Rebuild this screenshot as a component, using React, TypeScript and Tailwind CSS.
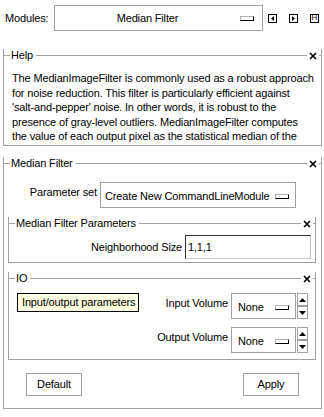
const line = "bg-[#a0a0a0]";

function CloseX() {
    return (
        <svg width="8" height="8" viewBox="0 0 8 8" className="mx-[2px] shrink-0">
            <path d="M1 1 L7 7 M7 1 L1 7" stroke="#000" strokeWidth="1.6" fill="none" />
        </svg>
    );
}

function Frame({ title, className, children }: { title: string; className: string; children: React.ReactNode }) {
    return (
        <div className={`border-x border-b border-[#a0a0a0] ${className}`}>
            {/* title sits on the top line */}
            <div className="-mx-px -mt-[6px] flex h-[13px] items-center">
                <span className={`h-px w-[7px] ${line}`} />
                <span className="ml-[1px] mr-[3px] whitespace-nowrap">{title}</span>
                <span className={`h-px flex-1 ${line}`} />
                <CloseX />
                <span className={`h-px w-[3px] ${line}`} />
            </div>
            {children}
        </div>
    );
}

function DropMark({ className = "" }: { className?: string }) {
    return <span className={`block h-[5px] w-[14px] shrink-0 border border-[#b0b0b0] border-b-black border-r-black bg-white ${className}`} />;
}

function Spinner() {
    return (
        <div className="ml-[1px] flex h-[26px] w-[11px] flex-col">
            <div className="flex h-[13px] items-center justify-center border border-[#a0a0a0]">
                <svg width="7" height="4" viewBox="0 0 7 4"><path d="M0 4 L3.5 0 L7 4 Z" fill="#000" /></svg>
            </div>
            <div className="flex h-[13px] items-center justify-center border border-[#a0a0a0]">
                <svg width="7" height="4" viewBox="0 0 7 4"><path d="M0 0 L3.5 4 L7 0 Z" fill="#000" /></svg>
            </div>
        </div>
    );
}

function VolumeRow({ label }: { label: string }) {
    return (
        <div className="flex items-start">
            <span className="mr-[3px] pt-[4px] whitespace-nowrap">{label}</span>
            <div className="flex h-[26px] w-[65px] items-center justify-between border border-[#a0a0a0] pl-[6px] pr-[6px] pt-[2px]">
                <span>None</span>
                <DropMark />
            </div>
            <Spinner />
        </div>
    );
}

export default function App() {
    const help = [
        "The MedianImageFilter is commonly used as a robust approach",
        "for noise reduction. This filter is particularly efficient against",
        "'salt-and-pepper' noise. In other words, it is robust to the",
        "presence of gray-level outliers. MedianImageFilter computes",
        "the value of each output pixel as the statistical median of the",
    ];

    return (
        <div className="h-[417px] w-[324px] overflow-hidden bg-white font-['Liberation_Sans',Arial,sans-serif] text-[11px] leading-[13px] tracking-[-0.15px] text-black">
            {/* Modules bar */}
            <div className="ml-[5px] mt-[5px] flex h-[26px] items-center">
                <span className="w-[49px]">Modules:</span>
                <div className="flex h-[26px] w-[209px] items-center border border-[#a0a0a0]">
                    <span className="flex-1 text-center">Median Filter</span>
                    <DropMark className="mr-[8px]" />
                </div>
                <span className="ml-[5px] flex h-[9px] w-[9px] items-center justify-center border border-black">
                    <svg width="3" height="5" viewBox="0 0 3 5"><path d="M3 0 L0 2.5 L3 5 Z" fill="#000" /></svg>
                </span>
                <span className="ml-[12px] flex h-[9px] w-[9px] items-center justify-center border border-black">
                    <svg width="3" height="5" viewBox="0 0 3 5"><path d="M0 0 L3 2.5 L0 5 Z" fill="#000" /></svg>
                </span>
                <span className="ml-[12px] flex h-[9px] w-[9px] items-center justify-center border border-black text-[8px] leading-none tracking-normal">
                    H
                </span>
            </div>

            {/* Help */}
            <Frame title="Help" className="ml-[3px] mt-[24px] w-[319px]">
                <div className="h-[83px] overflow-hidden pl-[8px] pt-[9px] leading-[14.5px]">
                    {help.map((t, i) => (
                        <div key={i} className="whitespace-nowrap">{t}</div>
                    ))}
                </div>
            </Frame>

            {/* Median Filter */}
            <Frame title="Median Filter" className="ml-[3px] mt-[17px] w-[319px]">
                <div className="mt-[12px] flex items-start justify-end pr-[25px]">
                    <span className="mr-[3px] pt-[4px] whitespace-nowrap">Parameter set</span>
                    <div className="flex h-[26px] w-[196px] items-center justify-between border border-[#a0a0a0] pl-[4px] pr-[6px] pt-[2px]">
                        <span className="whitespace-nowrap">Create New CommandLineModule</span>
                        <DropMark />
                    </div>
                </div>

                <Frame title="Median Filter Parameters" className="ml-[4px] mt-[15px] w-[308px]">
                    <div className="flex items-center justify-end pb-[3px] pr-[4px] pt-[5px]">
                        <span className="mr-[3px] whitespace-nowrap">Neighborhood Size</span>
                        <div className="flex h-[24px] w-[126px] items-center border border-[#c8c8c8] border-l-[#303030] border-t-[#303030] pl-[2px]">
                            1,1,1
                        </div>
                    </div>
                </Frame>

                <Frame title="IO" className="ml-[4px] mt-[15px] w-[308px]">
                    <div className="flex items-start pb-[6px] pr-[7px] pt-[8px]">
                        <div className="ml-[8px] flex h-[19px] w-[122px] items-center border border-black bg-[#ffffe1] pl-[4px] whitespace-nowrap">
                            Input/output parameters
                        </div>
                        <div className="ml-auto flex flex-col items-end gap-[8px]">
                            <VolumeRow label="Input Volume" />
                            <VolumeRow label="Output Volume" />
                        </div>
                    </div>
                </Frame>

                <div className="mt-[13px] flex justify-between pb-[12px] pl-[22px] pr-[22px]">
                    <button className="h-[23px] w-[56px] border border-[#a0a0a0] bg-white">Default</button>
                    <button className="h-[23px] w-[56px] border border-[#a0a0a0] bg-white">Apply</button>
                </div>
            </Frame>
        </div>
    );
}
